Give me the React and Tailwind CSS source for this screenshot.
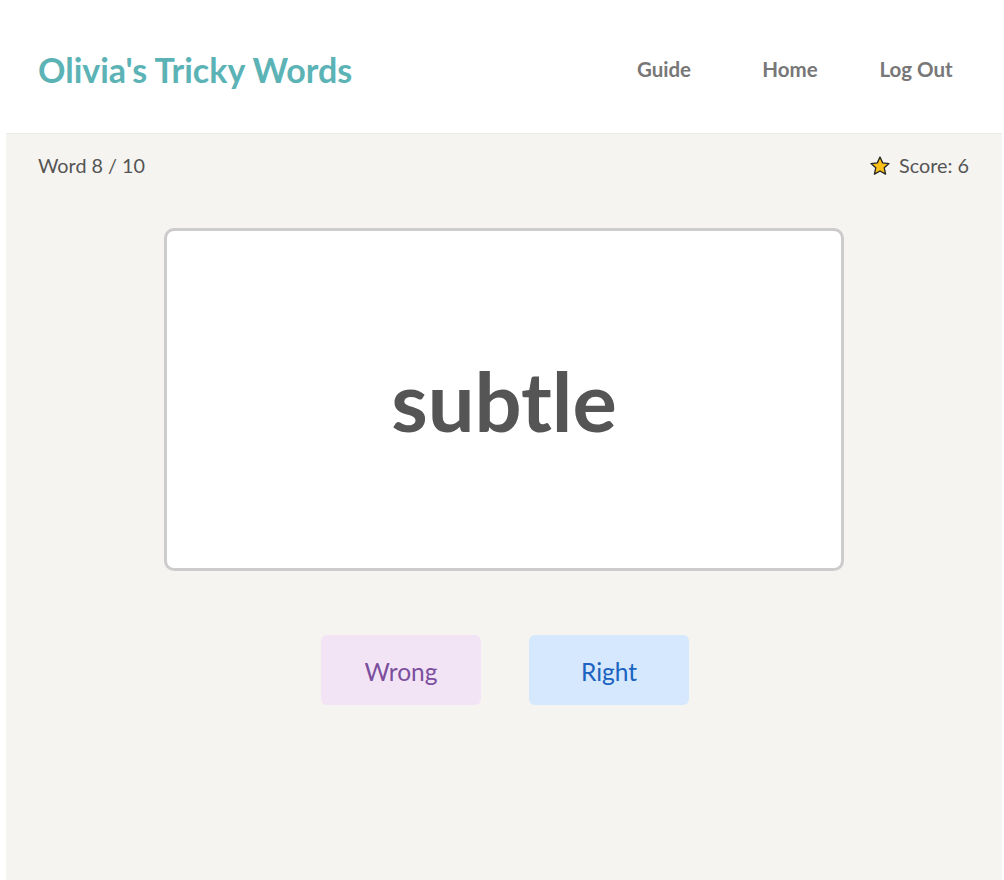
import React from "react";

function Star() {
  return (
    <svg width="22" height="22" viewBox="0 0 24 24" className="shrink-0">
      <path
        d="M12 2.2l2.9 6.4 6.9.7-5.2 4.7 1.5 6.9L12 17.4l-6.1 3.5 1.5-6.9-5.2-4.7 6.9-.7z"
        fill="#fcc21b"
        stroke="#222"
        strokeWidth="1.4"
        strokeLinejoin="round"
      />
    </svg>
  );
}

export default function App() {
  return (
    <div className="min-h-[880px] bg-white flex flex-col font-['Lato','Noto_Sans',sans-serif]">
      <header className="h-[133px] flex items-center justify-between pl-[38px] pr-[25px] pt-[5px]">
        <h1 className="text-[34px] font-bold text-[#5bb3b6]">
          Olivia's Tricky Words
        </h1>
        <nav className="flex items-center text-[20.5px] font-bold text-[#777]">
          <a className="w-[126px] text-center">Guide</a>
          <a className="w-[126px] text-center">Home</a>
          <a className="w-[126px] text-center">Log Out</a>
        </nav>
      </header>

      <main className="flex-1 ml-[6px] mr-[2px] bg-[#f5f4f1] border-t border-[#ecebe7] flex flex-col">
        <div className="flex items-center justify-between pl-[32px] pr-[33px] pt-[17px] text-[19.8px] text-[#555]">
          <span>Word 8 / 10</span>
          <span className="flex items-center gap-[8px]">
            <Star />
            Score: 6
          </span>
        </div>

        <div className="flex justify-center mt-[47px]">
          <div className="w-[680px] h-[343px] bg-white border-[3px] border-[#cccccc] rounded-[10px] flex items-center justify-center">
            <span className="text-[83px] font-bold text-[#555] leading-none mt-[2px]">subtle</span>
          </div>
        </div>

        <div className="flex justify-center gap-[48px] mt-[64px] ml-[2px]">
          <button className="w-[160px] h-[70px] rounded-[6px] bg-[#f3e4f5] text-[#7b4f9e] text-[24.5px] pt-[5px]">
            Wrong
          </button>
          <button className="w-[160px] h-[70px] rounded-[6px] bg-[#d5e8fd] text-[#1a63c0] text-[24.5px] pt-[5px]">
            Right
          </button>
        </div>
      </main>
    </div>
  );
}
